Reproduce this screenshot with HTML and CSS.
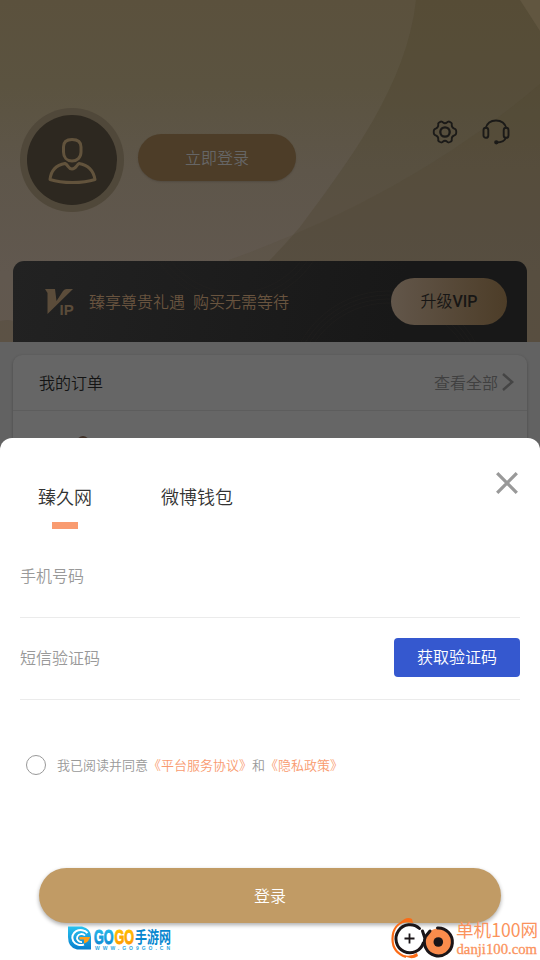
FILE: index.html
```html
<!DOCTYPE html>
<html lang="zh-CN">
<head>
<meta charset="utf-8">
<title>登录</title>
<link rel="stylesheet" href="styles.css">
</head>
<body>
<div class="screen">
  <section class="hero">
    <svg class="hero-bg" viewBox="0 0 540 342">
      <path d="M416 0C407 84 350 160 300 227Q284 246 268 262V342H540V0Z" fill="#433c22" fill-opacity=".23"/>
      <path d="M540 84Q410 195 229 260V342H540Z" fill="#433c22" fill-opacity=".1"/>
      <path d="M520 0L540 31V0Z" fill="#6b6049" fill-opacity=".5"/>
      <path d="M0 321Q8 319 13 321V342H0Z" fill="#43381f" fill-opacity=".18"/>
    </svg>
    <div class="profile">
      <div class="avatar">
        <svg width="90" height="90" viewBox="27 115 90 90" fill="none" stroke="#62533c" stroke-width="3" stroke-linejoin="round">
          <path d="M72 139.500C66 139.500 63.500 142 63.500 147V152C63.500 157.500 67 161 72 161S81 157.500 81 152V147C81 142 78.500 139.500 72 139.500Z"/>
          <path d="M65 163.500C56 165 51 171 50 179.500C62 183.500 83 183.500 95 179.500C93.500 171 88 165 79 163.500C76.500 165 76 169 72 169S68.500 165 65 163.500Z"/>
        </svg>
      </div>
      <button class="login-now">立即登录</button>
      <div class="tools">
        <svg width="26" height="26" viewBox="0 0 26 26" fill="none" stroke="#1b1a18" stroke-linejoin="round">
          <path stroke-width="1.800" d="M7.500 3.200Q10 1.800 10.800 3.300Q13 5.200 15.200 3.300Q16 1.800 18.500 3.200Q20.300 4.200 19.700 5.800Q19.500 8.500 22.300 9.600Q24.300 10 24.300 13Q24.300 16 22.300 16.400Q19.500 17.500 19.700 20.200Q20.300 21.800 18.500 22.800Q16 24.200 15.200 22.700Q13 20.800 10.800 22.700Q10 24.200 7.500 22.800Q5.700 21.800 6.300 20.200Q6.500 17.500 3.700 16.400Q1.700 16 1.700 13Q1.700 10 3.700 9.600Q6.500 8.500 6.300 5.800Q5.700 4.200 7.500 3.200Z"/>
          <circle cx="13" cy="13" r="4.700" stroke-width="2.300"/>
        </svg>
        <svg width="28" height="26" viewBox="0 0 28 26" fill="none" stroke="#1b1a18" stroke-width="1.900">
          <path d="M3.500 9.500C5 4 9 1.500 14 1.500S23 4 24.500 9.500"/>
          <rect x="1.500" y="8.800" width="4.800" height="10" rx="2.400"/>
          <rect x="21.700" y="8.800" width="4.800" height="10" rx="2.400"/>
          <path d="M24 18.500C23 21.500 19 23.500 14.500 23.500"/>
          <circle cx="14.300" cy="23.300" r="1.200" fill="#1b1a18"/>
        </svg>
      </div>
    </div>
    <div class="vip">
      <svg class="rings" viewBox="0 0 514 81" fill="none" stroke="#282522" stroke-opacity=".3">
        <circle cx="375" cy="130" r="88"/><circle cx="375" cy="130" r="92"/><circle cx="375" cy="130" r="96"/><circle cx="375" cy="130" r="100"/>
        <circle cx="223" cy="-50" r="82"/><circle cx="223" cy="-50" r="87"/><circle cx="223" cy="-50" r="92"/>
      </svg>
      <svg class="vip-icon" width="30" height="28" viewBox="0 0 30 28">
        <path d="M0 1H10L11.500 13L18 3Q19.500 1 21.500 1H28L2.500 26V5Z" fill="#5b4c3a"/>
        <text x="14.500" y="26.500">IP</text>
      </svg>
      <span class="vip-text">臻享尊贵礼遇<i></i>购买无需等待</span>
      <button class="upgrade">升级<b>VIP</b></button>
    </div>
  </section>
  <section class="orders">
    <div class="orders-head">
      <span>我的订单</span>
      <span class="all">查看全部
        <svg width="12" height="18" viewBox="0 0 12 18" fill="none" stroke="#454545" stroke-width="2.400"><path d="M1 1L10.200 9L1 17"/></svg>
      </span>
    </div>
    <i class="order-dot"></i>
  </section>

  <section class="sheet">
    <svg class="close" width="22" height="22" viewBox="0 0 22 22" stroke="#999" stroke-width="3.300"><path d="M1.200 1.200L20.800 20.800M20.800 1.200L1.200 20.800"/></svg>
    <div class="tabs">
      <span class="tab active">臻久网</span>
      <span class="tab">微博钱包</span>
    </div>
    <div class="field phone">手机号码</div>
    <div class="field sms"><span>短信验证码</span><button class="code">获取验证码</button></div>
    <div class="agree"><i class="radio"></i><span>我已阅读并同意<a>《平台服务协议》</a>和<a>《隐私政策》</a></span></div>
    <button class="submit">登录</button>
  </section>

  <svg class="mark-left" width="106" height="28" viewBox="0 0 106 28">
    <defs>
      <linearGradient id="blue" x2="0" y2="1"><stop stop-color="#28c2ef"/><stop offset="1" stop-color="#087fce"/></linearGradient>
      <linearGradient id="gold" x2="0" y2="1"><stop stop-color="#ffc500"/><stop offset="1" stop-color="#ff9300"/></linearGradient>
    </defs>
    <path d="M1 1.500H15Q24 3.500 24 12V24.500H10Q1 22.500 1 12Z" fill="url(#blue)"/>
    <path d="M20.500 8A8.500 7.500 0 1 0 17 19.500" fill="none" stroke="#fff" stroke-width="2"/>
    <path d="M18 10.500A4.500 4 0 1 0 15 17" fill="none" stroke="#fff" stroke-width="1.800"/>
    <path d="M12.500 12H23Q22 17 17 18.500L17 14.500H12.500Z" fill="#ff9d18"/>
    <g class="go">
      <text transform="translate(27 18.500) scale(.63 1)" fill="url(#blue)" stroke="url(#blue)">GO</text>
      <text transform="translate(47.500 18.500) scale(.63 1)" fill="url(#gold)" stroke="url(#gold)">GO</text>
    </g>
    <text class="cn" transform="translate(68 17.800) scale(.75 1)">手游网</text>
    <text class="url" x="28" y="24.800" textLength="75">WWW.GO9GO.CN</text>
  </svg>
  <svg class="mark-right" width="150" height="44" viewBox="390 916 150 44">
    <path d="M409 920.500C397 922 392.500 930 392.500 939C392.500 948 397 954 406 957" fill="none" stroke="#fb6b16" stroke-width="2.200"/>
    <path d="M400 923Q406 916 412 919L413 923Q405 921 400 923ZM403 955Q411 961 418 956L417 953Q411 957 403 955Z" fill="#fb6b16"/>
    <circle cx="410" cy="938.500" r="14" fill="#fff"/>
    <path d="M419.500 928.500A14 14 0 1 0 423.300 943" fill="none" stroke="#1b1518" stroke-width="3" stroke-linecap="round"/>
    <path d="M404.500 938.500H414.500M409.500 933.500V943.500" stroke="#1b1518" stroke-width="1.800"/>
    <circle cx="438.300" cy="942" r="13.500" fill="#fb8c4c"/>
    <path d="M437.500 928A14 14 0 1 1 425.500 936.500L430 931" fill="none" stroke="#1b1518" stroke-width="3" stroke-linecap="round" stroke-linejoin="round"/>
    <path d="M422.500 931L424.500 937" fill="none" stroke="#1b1518" stroke-width="3" stroke-linecap="round"/>
    <circle cx="438.300" cy="942" r="4.800" fill="#1b1518"/>
    <text class="dj" x="456" y="937" textLength="82" lengthAdjust="spacingAndGlyphs">单机100网</text>
    <text class="dj-url" x="456.500" y="954" textLength="80.500" lengthAdjust="spacingAndGlyphs">danji100.com</text>
  </svg>
</div>
</body>
</html>
```

FILE: styles.css
```css
* { box-sizing: border-box; }
body { margin: 0; font: 350 16px/24px "Noto Sans CJK SC", sans-serif; }
button { border: 0; padding: 0 0 3px; font: inherit; }
svg { display: block; flex: none; }
.screen { position: relative; width: 540px; height: 960px; overflow: hidden; background: #626262; }
.hero { position: relative; height: 342px; padding: 108px 13px 0; background: linear-gradient(#5b513d, #5b5340 25%, #5e564a 50%, #61584f 80%, #62584e); }
.hero-bg { position: absolute; left: 0; top: 0; width: 540px; height: 342px; }
.profile { position: relative; display: flex; height: 153px; padding: 0 17px 0 7px; align-items: flex-start; }
.avatar { width: 104px; height: 104px; padding: 7px; border-radius: 50%; background: #50483a; }
.avatar svg { border-radius: 50%; background: #2d2820; }
.login-now { width: 158px; height: 47px; padding-bottom: 2px; margin: 26px 0 0 14px; border-radius: 24px; background: #4d3d28; color: #666; box-shadow: 0 1px 2px #0002; }
.tools { display: flex; gap: 24px; margin: 11px 0 0 auto; }
.vip { position: relative; display: flex; align-items: center; height: 81px; padding: 0 20px 0 32px; border-radius: 11px 11px 0 0; background: linear-gradient(100deg, #222, #181818 75%); color: #69543f; }
.rings { position: absolute; left: 0; top: 0; width: 514px; height: 81px; }
.vip-icon text { font: 700 15px "Liberation Sans", sans-serif; fill: #5b4c3a; }
.vip-text { position: relative; margin: -2px 0 0 14px; }
.vip-text i { display: inline-block; width: 8px; }
.upgrade { position: relative; width: 116px; height: 47px; margin-left: auto; border-radius: 24px; background: linear-gradient(90deg, #62564a, #4d3d28); color: #171615; }
.upgrade b { font: 500 16px Roboto, sans-serif; }
.orders { height: 110px; margin: 13px 13px 0; border-radius: 9px 9px 0 0; background: #666; box-shadow: 0 1px 3px #0004; }
.orders-head { display: flex; height: 56px; align-items: center; justify-content: space-between; padding: 0 13px 2px 26px; border-bottom: 1px solid #5d5d5d; color: #141414; }
.all { display: flex; align-items: center; gap: 4px; color: #404040; }
.order-dot { display: block; width: 12px; height: 12px; margin: 25px 0 0 64px; border-radius: 50%; background: #3f3027; }
.sheet { position: absolute; left: 0; top: 438px; width: 540px; height: 522px; padding: 39px 20px 0; border-radius: 12px 12px 0 0; background: #fff; }
.close { position: absolute; left: 496px; top: 34px; }
.tabs { display: flex; gap: 69px; height: 59px; padding: 6px 0 0 18px; font-size: 18px; line-height: 27px; color: #333; }
.tab.active::after { content: ""; display: block; width: 26px; height: 7px; margin: 12px auto 0; background: #f99b70; }
.field { display: flex; justify-content: space-between; height: 82px; border-bottom: 1px solid #ebebeb; color: #999; }
.phone { padding-top: 27px; }
.sms { padding-top: 20px; }
.sms span { margin-top: 7px; }
.code { width: 126px; height: 39px; border-radius: 4px; background: #3558cf; color: #fff; }
.agree { display: flex; align-items: center; gap: 11px; height: 20px; margin: 55px 0 0 6px; font-size: 13px; line-height: 20px; color: #999; white-space: nowrap; }
.radio { width: 20px; height: 20px; border: 1.500px solid #999; border-radius: 50%; }
.agree a { color: #f99b70; }
.submit { display: block; width: 462px; height: 55px; padding-bottom: 2px; margin: 93px 0 0 19px; border-radius: 28px; background: #c19b65; color: #fff; box-shadow: 0 2px 4px #0005; }
.mark-left { position: absolute; left: 67px; top: 925px; }
.go { font: 700 20px "Liberation Sans", sans-serif; stroke-width: .9; }
.cn { font: 700 16px "Noto Sans CJK SC", sans-serif; fill: #0787cf; }
.url { font: 700 5px "Liberation Sans", sans-serif; fill: #2aa7df; }
.mark-right { position: absolute; left: 390px; top: 916px; }
.dj { font: 18px "Noto Sans CJK SC", sans-serif; fill: #fb935c; }
.dj-url { font: 15px "Liberation Serif", serif; fill: #fb935c; stroke: #fb935c; stroke-width: .3; }
```
